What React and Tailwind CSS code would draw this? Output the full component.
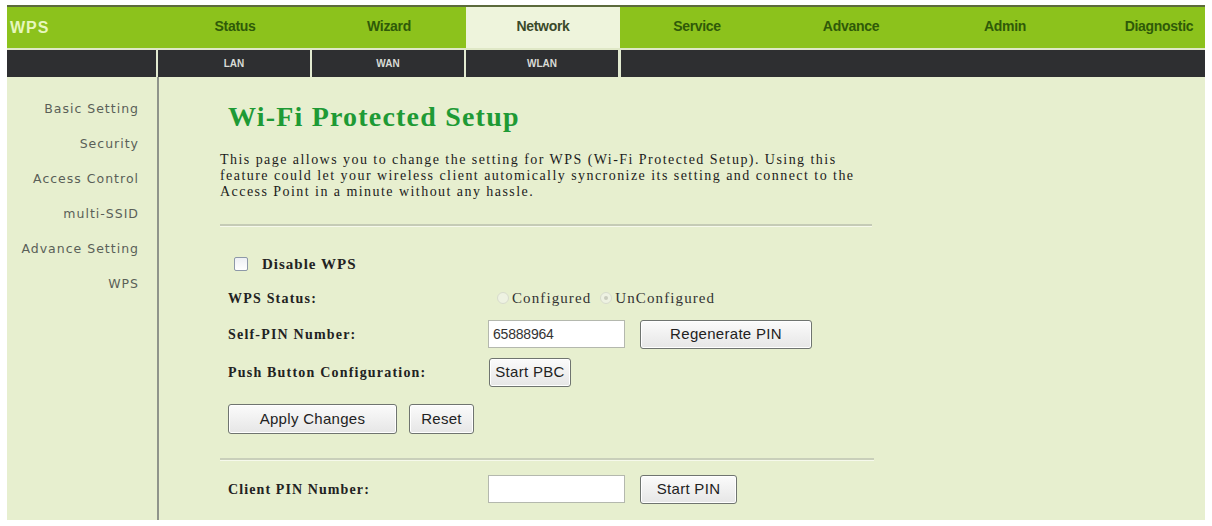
import React from "react";

const tabs = ["Status", "Wizard", "Network", "Service", "Advance", "Admin", "Diagnostic"];
const subTabs = ["LAN", "WAN", "WLAN"];
const sideItems = ["Basic Setting", "Security", "Access Control", "multi-SSID", "Advance Setting", "WPS"];

const serif = { fontFamily: '"Liberation Serif", "Times New Roman", serif' };
const sans = { fontFamily: '"Liberation Sans", Arial, sans-serif' };

function PlainButton({ children, className = "" }) {
    return (
        <button
            className={`h-[29px] rounded-[3px] border border-[#6f7470] bg-gradient-to-b from-[#fbfbfb] to-[#e6e6e6] text-[15px] tracking-[0.3px] text-[#222] shadow-[inset_0_0_0_1px_#fff] ${className}`}
            style={sans}
        >
            {children}
        </button>
    );
}

function Radio({ checked }) {
    return (
        <span className="flex h-[12px] w-[12px] items-center justify-center rounded-full border border-[#d8dccd] bg-[#eef2e2]">
            {checked && <span className="h-[4px] w-[4px] rounded-full bg-[#c9cdbd]" />}
        </span>
    );
}

const App = () => {
    return (
        <div className="h-[526px] w-full bg-white pl-[7px] pt-[5px]">
            <div className="w-[1198px] overflow-hidden">
                {/* top line */}
                <div className="h-[2px] bg-[#5c6a3c]" />

                {/* main nav */}
                <div className="flex h-[41px] bg-[#8cc21c]">
                    <div className="w-[151px] shrink-0 pl-[3px] pt-[8px]">
                        <span className="text-[16px] font-bold tracking-[1px] text-[#e6f7bd]" style={sans}>
                            WPS
                        </span>
                    </div>
                    {tabs.map((t) => (
                        <div
                            key={t}
                            className={`flex w-[154px] shrink-0 items-center justify-center pb-[2px] text-[14px] font-bold tracking-[-0.3px] ${
                                t === "Network" ? "bg-[#eef4dc] text-[#3a4a2a]" : "text-[#2f5a08]"
                            }`}
                            style={sans}
                        >
                            {t}
                        </div>
                    ))}
                </div>

                <div className="h-[2px] bg-[#dfe8c6]" />

                {/* sub nav */}
                <div className="flex h-[27px] gap-[2px] bg-[#e2ead0]">
                    <div className="w-[149px] shrink-0 bg-[#2e2f31]" />
                    {subTabs.map((s) => (
                        <div
                            key={s}
                            className="flex w-[152px] shrink-0 items-center justify-center bg-[#2e2f31] text-[10px] font-bold text-[#d9dbd6]"
                            style={sans}
                        >
                            {s}
                        </div>
                    ))}
                    <div className="ml-[1px] flex-1 bg-[#2e2f31]" />
                </div>

                {/* body */}
                <div className="flex h-[443px] bg-[#e7efcf]">
                    {/* sidebar */}
                    <div className="flex w-[152px] shrink-0 flex-col items-end border-r-2 border-[#8f948a] pr-[18px] pt-[15px]">
                        {sideItems.map((s) => (
                            <div
                                key={s}
                                className="flex h-[35px] items-center text-[12.5px] tracking-[1px] text-[#5a5f58]"
                                style={{ fontFamily: '"DejaVu Sans", Verdana, sans-serif' }}
                            >
                                {s}
                            </div>
                        ))}
                    </div>

                    {/* main content */}
                    <div className="flex w-[654px] flex-col pl-[61px]" style={serif}>
                        <h1 className="ml-[8px] mt-[23px] h-[34px] text-[28px] font-bold leading-[34px] tracking-[1.2px] text-[#1e9a35]">
                            Wi-Fi Protected Setup
                        </h1>

                        <p className="mt-[18px] w-[660px] whitespace-nowrap text-[14px] leading-[16px] tracking-[1.45px] text-[#1c1c1c]">
                            This page allows you to change the setting for WPS (Wi-Fi Protected Setup). Using this
                            <br />
                            feature could let your wireless client automically syncronize its setting and connect to the
                            <br />
                            Access Point in a minute without any hassle.
                        </p>

                        <div className="mt-[24px] h-[2px] w-[652px] bg-[#c5cbb6] shadow-[0_1px_0_#f6f9ec]" />

                        <div className="ml-[14px] mt-[26px] flex h-[24px] items-center gap-[14px]">
                            <span className="h-[14px] w-[14px] rounded-[2px] border border-[#8d98a8] bg-gradient-to-b from-[#eef0f4] to-[#ffffff]" />
                            <span className="text-[15px] font-bold tracking-[1px] text-[#222]">Disable WPS</span>
                        </div>

                        <div className="ml-[8px] mt-[8px] flex h-[28px] items-center">
                            <span className="w-[260px] text-[14px] font-bold tracking-[1.2px] text-[#222]">WPS Status:</span>
                            <div className="ml-[9px] flex items-center text-[15px] tracking-[1.1px] text-[#333]">
                                <Radio />
                                <span className="ml-[3px]">Configured</span>
                                <span className="ml-[9px]">
                                    <Radio checked />
                                </span>
                                <span className="ml-[3px]">UnConfigured</span>
                            </div>
                        </div>

                        <div className="ml-[8px] mt-[8px] flex h-[28px] items-center">
                            <span className="w-[260px] text-[14px] font-bold tracking-[1.2px] text-[#222]">Self-PIN Number:</span>
                            <div
                                className="flex h-[28px] w-[137px] items-center border border-[#b4b8ae] bg-white pl-[4px] text-[14px] tracking-[-0.2px] text-[#333]"
                                style={sans}
                            >
                                65888964
                            </div>
                            <PlainButton className="ml-[15px] w-[172px]">Regenerate PIN</PlainButton>
                        </div>

                        <div className="ml-[8px] mt-[10px] flex h-[28px] items-center">
                            <span className="w-[261px] text-[14px] font-bold tracking-[1.2px] text-[#222]">
                                Push Button Configuration:
                            </span>
                            <PlainButton className="w-[82px] border-[#3c6f9e] from-[#f4f9fd] to-[#dfeaf4] shadow-[inset_0_0_0_1px_#bfe0f7]">
                                Start PBC
                            </PlainButton>
                        </div>

                        <div className="ml-[8px] mt-[18px] flex h-[30px] items-center gap-[12px]">
                            <PlainButton className="h-[30px] w-[169px]">Apply Changes</PlainButton>
                            <PlainButton className="h-[30px] w-[65px]">Reset</PlainButton>
                        </div>

                        <div className="mt-[24px] h-[2px] w-[654px] bg-[#c9cfba] shadow-[0_1px_0_#f6f9ec]" />

                        <div className="ml-[8px] mt-[15px] flex h-[28px] items-center">
                            <span className="w-[260px] text-[14px] font-bold tracking-[1.1px] text-[#222]">Client PIN Number:</span>
                            <div className="h-[28px] w-[137px] border border-[#b4b8ae] bg-white" />
                            <PlainButton className="ml-[15px] h-[28px] w-[97px]">Start PIN</PlainButton>
                        </div>
                    </div>
                </div>
            </div>
        </div>
    );
};

export default App;
